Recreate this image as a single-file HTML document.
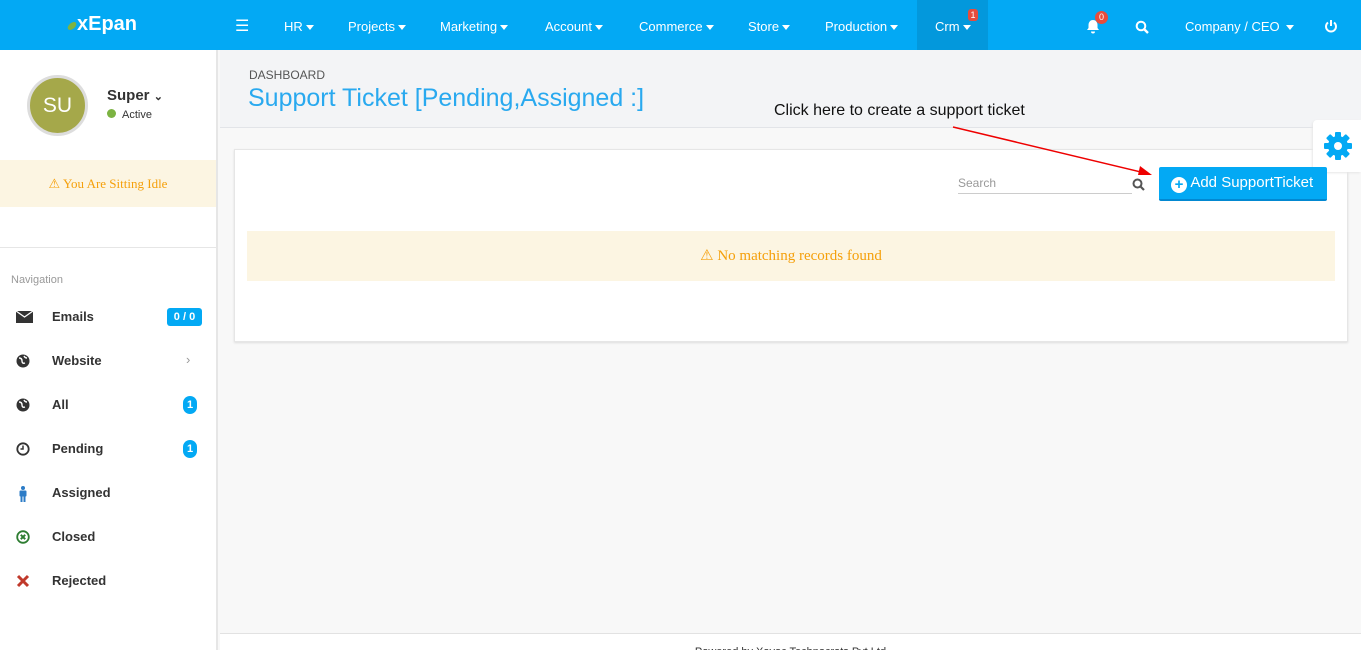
<!DOCTYPE html>
<html><head><meta charset="utf-8"><style>
*{box-sizing:border-box;margin:0;padding:0}
html,body{width:1361px;height:650px;overflow:hidden}
body{font-family:"Liberation Sans",sans-serif;background:#f8f8f8;position:relative}
.top{position:absolute;left:0;top:0;width:1361px;height:50px;background:#03a9f4;color:#fff}
.top .it{position:absolute;top:0;height:50px;line-height:54px;font-size:13px}
.car{display:inline-block;border-left:4px solid transparent;border-right:4px solid transparent;border-top:5px solid #fff;vertical-align:middle;margin-left:3px}
.side{position:absolute;left:0;top:50px;width:218px;height:600px;background:#fff;border-right:2px solid #e6e6e6}
.nav{position:absolute;left:0;width:216px;height:44px;font-size:13px;font-weight:bold;color:#333}
.nav svg{position:absolute;left:16px;top:2px}
.nav .t{position:absolute;left:52px;top:1px}
.bdg{position:absolute;background:#03a9f4;color:#fff;font-size:11px;font-weight:bold;text-align:center}
</style></head><body>
<div class="top">
 <div class="it" style="left:67px;font-size:20px;font-weight:bold;line-height:48px"><svg width="10" height="10" style="vertical-align:-1px"><ellipse cx="5" cy="5" rx="5" ry="3" transform="rotate(-40 5 5)" fill="#7cb342"/></svg>xEpan</div>
 <div class="it" style="left:235px;font-size:16px">☰</div>
 <div class="it" style="left:284px">HR<span class="car"></span></div>
 <div class="it" style="left:348px">Projects<span class="car"></span></div>
 <div class="it" style="left:440px">Marketing<span class="car"></span></div>
 <div class="it" style="left:545px">Account<span class="car"></span></div>
 <div class="it" style="left:639px">Commerce<span class="car"></span></div>
 <div class="it" style="left:748px">Store<span class="car"></span></div>
 <div class="it" style="left:825px">Production<span class="car"></span></div>
 <div class="it" style="left:917px;width:71px;background:#0398dc;padding-left:18px">Crm<span class="car"></span></div>
 <div style="position:absolute;left:968px;top:9px;width:10px;height:12px;background:#e74c3c;border-radius:3px;font-size:9px;text-align:center;line-height:12px">1</div>
 <svg style="position:absolute;left:1086px;top:19px" width="14" height="15" viewBox="0 0 14 15"><path d="M7 1c-3 0-4.5 2.5-4.5 5v3L1 11h12l-1.5-2V6C11.5 3.5 10 1 7 1z M5 12.5a2 2 0 0 0 4 0z" fill="#fff"/></svg>
 <div style="position:absolute;left:1095px;top:11px;width:13px;height:13px;background:#e74c3c;border-radius:50%;font-size:9px;text-align:center;line-height:13px">0</div>
 <svg style="position:absolute;left:1135px;top:20px" width="14" height="14"><circle cx="6" cy="6" r="4.3" stroke="#fff" stroke-width="2" fill="none"/><path d="M9 9l4 4" stroke="#fff" stroke-width="2.4"/></svg>
 <div class="it" style="left:1185px">Company / CEO<span class="car" style="margin-left:6px"></span></div>
 <svg style="position:absolute;left:1324px;top:19px" width="14" height="14"><path d="M4 3.5A5 5 0 1 0 10 3.5" stroke="#fff" stroke-width="2" fill="none"/><path d="M7 1v6" stroke="#fff" stroke-width="2"/></svg>
</div>
<div class="side">
 <div style="position:absolute;left:27px;top:25px;width:61px;height:61px;border-radius:50%;background:#a5a84a;border:3px solid #ddd;color:#fff;font-size:21px;text-align:center;line-height:55px">SU</div>
 <div style="position:absolute;left:107px;top:37px;font-size:15px;font-weight:bold;color:#333">Super <span style="font-size:11px">⌄</span></div>
 <div style="position:absolute;left:107px;top:59px;font-size:11px;color:#333"><span style="display:inline-block;width:9px;height:9px;border-radius:50%;background:#7cb342;margin-right:6px"></span>Active</div>
 <div style="position:absolute;left:0;top:110px;width:216px;height:47px;background:#fcf5e2;color:#f5a00b;font-family:'Liberation Serif',serif;font-size:13px;text-align:center;line-height:47px">⚠ You Are Sitting Idle</div>
 <div style="position:absolute;left:0;top:197px;width:216px;border-top:1px solid #e6e6e6"></div>
 <div style="position:absolute;left:11px;top:224px;font-size:11px;color:#999">Navigation</div>
 <div class="nav" style="top:258px"><svg width="17" height="13"><rect x="0" y="1" width="17" height="12" fill="#333"/><path d="M0 1l8.5 6L17 1" stroke="#fff" stroke-width="1.3" fill="none"/></svg><span class="t">Emails</span><span class="bdg" style="left:167px;top:0;width:35px;height:18px;line-height:18px;border-radius:3px">0 / 0</span></div>
 <div class="nav" style="top:302px"><svg width="14" height="14"><circle cx="7" cy="7" r="6.5" fill="#333"/><path d="M3 4q3 0 3 3t3 2M8 2q1 2 3 2" stroke="#fff" stroke-width="1.4" fill="none"/></svg><span class="t">Website</span><span style="position:absolute;left:186px;top:0;color:#999;font-weight:normal">›</span></div>
 <div class="nav" style="top:346px"><svg width="14" height="14"><circle cx="7" cy="7" r="6.5" fill="#333"/><path d="M3 4q3 0 3 3t3 2M8 2q1 2 3 2" stroke="#fff" stroke-width="1.4" fill="none"/></svg><span class="t">All</span><span class="bdg" style="left:183px;top:0;width:14px;height:18px;line-height:18px;border-radius:7px">1</span></div>
 <div class="nav" style="top:390px"><svg width="14" height="14"><circle cx="7" cy="7" r="5.7" stroke="#333" stroke-width="1.8" fill="none"/><path d="M7 3.5V7H4.5" stroke="#333" stroke-width="1.5" fill="none"/></svg><span class="t">Pending</span><span class="bdg" style="left:183px;top:0;width:14px;height:18px;line-height:18px;border-radius:7px">1</span></div>
 <div class="nav" style="top:434px"><svg width="14" height="16"><circle cx="7" cy="2" r="2" fill="#2c7cc7"/><rect x="3.5" y="4.5" width="7" height="6" rx="1" fill="#2c7cc7"/><rect x="4.5" y="10" width="2" height="6" fill="#2c7cc7"/><rect x="7.5" y="10" width="2" height="6" fill="#2c7cc7"/></svg><span class="t">Assigned</span></div>
 <div class="nav" style="top:478px"><svg width="14" height="14"><circle cx="7" cy="7" r="5.8" stroke="#2e7d32" stroke-width="1.8" fill="none"/><path d="M4.8 4.8l4.4 4.4M9.2 4.8l-4.4 4.4" stroke="#2e7d32" stroke-width="2"/></svg><span class="t">Closed</span></div>
 <div class="nav" style="top:522px"><svg width="14" height="14"><path d="M2 2l10 10M12 2L2 12" stroke="#c0392b" stroke-width="3"/></svg><span class="t">Rejected</span></div>
</div>
<div style="position:absolute;left:220px;top:50px;width:1141px;height:78px;background:#f3f4f6;border-bottom:1px solid #e2e4e8"></div>
<div style="position:absolute;left:249px;top:68px;font-size:12px;color:#555">DASHBOARD</div>
<div style="position:absolute;left:248px;top:84px;font-size:25px;color:#29a9ef">Support Ticket [Pending,Assigned :]</div>
<div style="position:absolute;left:774px;top:102px;font-size:16px;color:#111">Click here to create a support ticket</div>
<div style="position:absolute;left:234px;top:149px;width:1114px;height:193px;background:#fff;border:1px solid #e6e6e6;box-shadow:0 1px 2px #ddd"></div>
<div style="position:absolute;left:1313px;top:120px;width:48px;height:52px;background:#fff;border-radius:4px 0 0 4px;box-shadow:-1px 1px 2px #e6e6e6"></div>
<svg style="position:absolute;left:1323px;top:131px" width="30" height="30" viewBox="0 0 30 30"><g fill="#03a9f4"><circle cx="15" cy="15" r="10"/><g id="t"><rect x="12" y="1" width="6" height="6" rx="1"/><rect x="12" y="23" width="6" height="6" rx="1"/></g><use href="#t" transform="rotate(45 15 15)"/><use href="#t" transform="rotate(90 15 15)"/><use href="#t" transform="rotate(135 15 15)"/></g><circle cx="15" cy="15" r="4" fill="#fff"/></svg>
<div style="position:absolute;left:958px;top:176px;width:174px;height:18px;border-bottom:1px solid #ccc;font-size:12px;color:#999">Search</div>
<svg style="position:absolute;left:1132px;top:178px" width="13" height="13"><circle cx="5.5" cy="5.5" r="4" stroke="#555" stroke-width="2" fill="none"/><path d="M8.5 8.5l3.5 3.5" stroke="#555" stroke-width="2.2"/></svg>
<div style="position:absolute;left:1159px;top:167px;width:168px;height:34px;background:#03a9f4;border-bottom:2px solid #0288d1;border-radius:2px;color:#fff;font-size:15px;line-height:32px;padding-left:12px"><span style="display:inline-block;width:16px;height:16px;border-radius:50%;background:#fff;color:#03a9f4;font-weight:bold;text-align:center;line-height:16px;font-size:15px;vertical-align:-2px">+</span> Add SupportTicket</div>
<svg style="position:absolute;left:0;top:0" width="1361" height="650"><line x1="953" y1="127" x2="1145" y2="173" stroke="#e00" stroke-width="1.5"/><path d="M1152 175l-12-9-2 9z" fill="#e00"/></svg>
<div style="position:absolute;left:247px;top:231px;width:1088px;height:50px;background:#fcf5e2;color:#f5a00b;font-family:'Liberation Serif',serif;font-size:15px;text-align:center;line-height:50px">⚠ No matching records found</div>
<div style="position:absolute;left:220px;top:633px;width:1141px;height:17px;background:#fff;border-top:1px solid #e2e2e2;overflow:hidden"><div style="font-size:11px;color:#333;text-align:center;padding-top:12px">Powered by Xavoc Technocrats Pvt Ltd</div></div>
</body></html>
